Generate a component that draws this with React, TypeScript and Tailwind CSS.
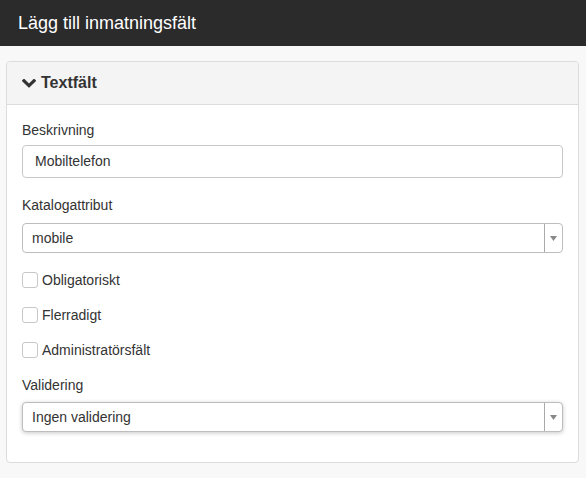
const font = { fontFamily: '"Liberation Sans", Arial, sans-serif' };

function Chevron() {
  return (
    <svg width="14" height="9" viewBox="90 590 1612 980" className="mr-[5px]">
      <path
        d="M1683 808l-742 741q-19 19-45 19t-45-19l-742-741q-19-19-19-45.5t19-45.5l166-165q19-19 45-19t45 19l531 531 531-531q19-19 45-19t45 19l166 165q19 19 19 45.5t-19 45.5z"
        fill="#333"
      />
    </svg>
  );
}

function Checkbox({ label }: { label: string }) {
  return (
    <label className="flex items-center h-[20px] text-[14px] text-[#333]">
      <span className="w-[16px] h-[16px] rounded-[3px] border border-[#c8c8c8] bg-white mr-[4px]" />
      {label}
    </label>
  );
}

function Select({ value, shadow }: { value: string; shadow?: boolean }) {
  return (
    <div
      className={`flex h-[30px] rounded-[4px] border border-[#bdbdbd] bg-white ${
        shadow ? "shadow-[0_1px_4px_rgba(0,0,0,0.22)]" : ""
      }`}
    >
      <div className="flex-1 flex items-center pl-[9px] text-[14px] text-[#333]">{value}</div>
      <div className="w-[18px] border-l border-[#aaa] flex items-center justify-center">
        <svg width="7" height="5" viewBox="0 0 7 5">
          <path d="M0 0h7L3.5 5z" fill="#888" />
        </svg>
      </div>
    </div>
  );
}

export default function App() {
  return (
    <div className="min-h-[478px] bg-[#f8f8f8]" style={font}>
      {/* Modal header */}
      <div className="h-[46px] bg-[#2b2b2b] flex items-center px-[18px]">
        <h1 className="text-[18px] text-white">Lägg till inmatningsfält</h1>
      </div>

      <div className="pt-[15px] pl-[6px] pr-[7px]">
        <div className="border border-[#dcdcdc] rounded-[4px] bg-white">
          <div className="h-[43px] bg-[#f4f4f4] border-b border-[#dcdcdc] rounded-t-[4px] flex items-center px-[15px]">
            <Chevron />
            <span className="text-[16px] font-bold text-[#333]">Textfält</span>
          </div>

          <div className="px-[15px] pt-[15px] pb-[30px] text-[#333]">
            <div className="text-[14px] leading-[20px] mb-[5px]">Beskrivning</div>
            <div className="h-[33px] rounded-[4px] border border-[#c8c8c8] flex items-center px-[12px] text-[14px]">
              Mobiltelefon
            </div>

            <div className="text-[14px] leading-[20px] mt-[17px] mb-[8px]">Katalogattribut</div>
            <Select value="mobile" />

            <div className="mt-[17px] flex flex-col gap-[15px]">
              <Checkbox label="Obligatoriskt" />
              <Checkbox label="Flerradigt" />
              <Checkbox label="Administratörsfält" />
            </div>

            <div className="text-[14px] leading-[20px] mt-[15px] mb-[7px]">Validering</div>
            <Select value="Ingen validering" shadow />
          </div>
        </div>
      </div>
    </div>
  );
}
